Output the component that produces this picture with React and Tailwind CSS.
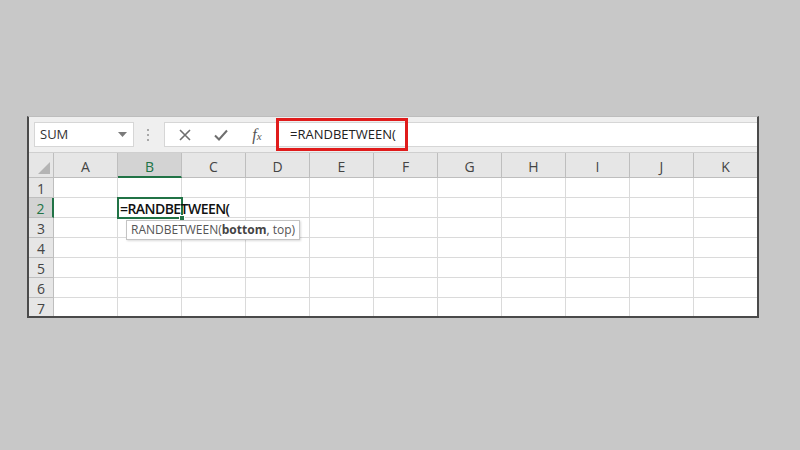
import React from "react";

const cols = ["A", "B", "C", "D", "E", "F", "G", "H", "I", "J", "K"];
const rows = [1, 2, 3, 4, 5, 6, 7];

export default function App() {
  return (
    <div
      className="w-[800px] h-[450px] bg-[#c8c8c8] pt-[116px] pl-[27px]"
      style={{ fontFamily: '"Open Sans", "Liberation Sans", sans-serif' }}
    >
      <div className="w-[732px] h-[202px] border-l-2 border-r-2 border-b-2 border-[#4a4a4a] border-t border-t-[#bdbdbd] bg-white flex flex-col overflow-hidden">
        {/* formula bar */}
        <div className="h-[36px] shrink-0 bg-[#efefef] flex items-center border-b border-[#cfcfcf] relative">
          <div className="ml-[5px] w-[100px] h-[25px] bg-white border border-[#d6d6d6] flex items-center justify-between pl-[5px] pr-[6px]">
            <span className="text-[13px] text-[#333]">SUM</span>
            <svg width="9" height="6" viewBox="0 0 9 6">
              <path d="M0 0 L9 0 L4.5 5 Z" fill="#7a7a7a" />
            </svg>
          </div>
          <div className="ml-[13px] flex flex-col gap-[3px]">
            <div className="w-[2px] h-[2px] bg-[#a8a8a8]" />
            <div className="w-[2px] h-[2px] bg-[#a8a8a8]" />
            <div className="w-[2px] h-[2px] bg-[#a8a8a8]" />
          </div>
          <div className="ml-[15px] flex-1 h-[25px] bg-white border border-[#d6d6d6] border-r-0 flex items-center">
            <div className="w-[36px] flex justify-center ml-[2px]">
              <svg width="12" height="12" viewBox="0 0 12 12">
                <path d="M1 1 L11 11 M11 1 L1 11" stroke="#6e6e6e" strokeWidth="1.6" />
              </svg>
            </div>
            <div className="w-[36px] flex justify-center">
              <svg width="14" height="12" viewBox="0 0 14 12">
                <path d="M1 6.5 L5 10.5 L13 1.5" stroke="#6e6e6e" strokeWidth="2" fill="none" />
              </svg>
            </div>
            <div className="w-[36px] flex justify-center">
              <span
                className="italic text-[16px] leading-none text-[#555]"
                style={{ fontFamily: '"Liberation Serif", serif' }}
              >
                f<span className="text-[11px]">x</span>
              </span>
            </div>
          </div>
          <div className="absolute left-[247px] top-[1px] w-[132px] h-[33px] border-[3px] border-[#e01b1b] flex items-center pl-[11px]">
            <span className="text-[13px] text-[#222]">=RANDBETWEEN(</span>
          </div>
        </div>

        {/* grid */}
        <div className="grid grid-cols-[25px_repeat(11,64px)] grid-rows-[25px_repeat(7,20px)] relative">
          {/* header row */}
          <div className="bg-[#e6e6e6] border-r border-b border-[#bebebe] relative overflow-hidden">
            <svg className="absolute right-[3px] bottom-[3px]" width="12" height="12" viewBox="0 0 12 12">
              <path d="M12 0 L12 12 L0 12 Z" fill="#b4b4b4" />
            </svg>
          </div>
          {cols.map((c) => (
            <div
              key={c}
              className={
                c === "B"
                  ? "bg-[#d3d3d3] border-r border-[#bebebe] border-b-2 border-b-[#217346] flex items-center justify-center pt-[3px] text-[14px] text-[#217346]"
                  : "bg-[#e6e6e6] border-r border-b border-[#bebebe] flex items-center justify-center pt-[3px] text-[14px] text-[#444]"
              }
            >
              {c}
            </div>
          ))}
          {rows.map((r) => (
            <React.Fragment key={r}>
              <div
                className={
                  r === 2
                    ? "bg-[#d3d3d3] border-r-2 border-r-[#217346] border-b border-[#bebebe] flex items-center justify-center pt-[1px] text-[14px] text-[#217346]"
                    : "bg-[#e6e6e6] border-r border-b border-[#bebebe] flex items-center justify-center pt-[1px] text-[14px] text-[#444]"
                }
              >
                {r}
              </div>
              {cols.map((c) => (
                <div key={c} className="border-r border-b border-[#dadada] bg-white" />
              ))}
            </React.Fragment>
          ))}

          {/* active cell */}
          <div className="absolute left-[88px] top-[44px] w-[66px] h-[22px] border-2 border-[#217346]">
            <div className="absolute right-[-4px] bottom-[-4px] w-[6px] h-[6px] bg-[#217346] border border-white" />
          </div>
          <div className="absolute left-[91px] top-[45px] h-[20px] flex items-center whitespace-nowrap">
            <span className="text-[14px] font-semibold text-[#111] tracking-[-0.55px]">=RANDBETWEEN(</span>
          </div>
          {/* tooltip */}
          <div className="absolute left-[97px] top-[67px] h-[20px] px-[4px] bg-white border border-[#c4c4c4] shadow-[1px_1px_2px_rgba(0,0,0,0.15)] flex items-center whitespace-nowrap">
            <span className="text-[12px] text-[#555]">
              RANDBETWEEN(<span className="font-bold text-[#444]">bottom</span>, top)
            </span>
          </div>
        </div>
      </div>
    </div>
  );
}
